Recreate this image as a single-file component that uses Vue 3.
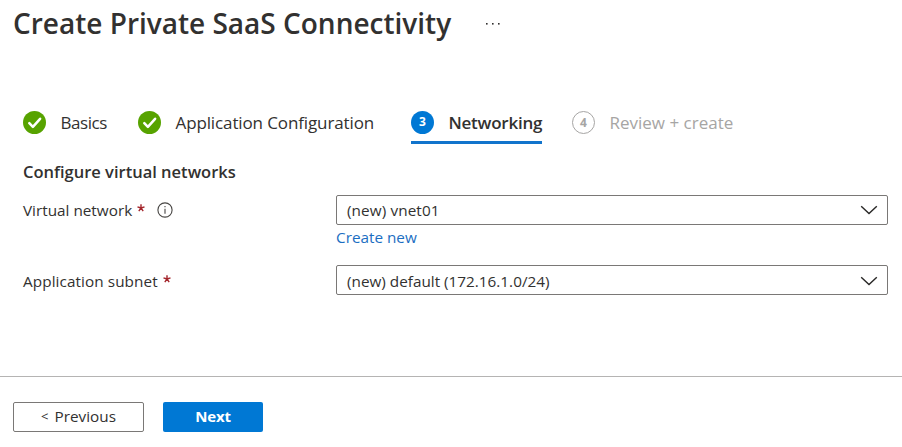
<script setup>
import { ref } from 'vue'

const steps = [
  { id: 'basics', label: 'Basics', state: 'done' },
  { id: 'config', label: 'Application Configuration', state: 'done' },
  { id: 'network', label: 'Networking', state: 'active', number: 3 },
  { id: 'review', label: 'Review + create', state: 'pending', number: 4 },
]

const fields = ref([
  { id: 'vnet', label: 'Virtual network', value: '(new) vnet01', info: true, link: 'Create new' },
  { id: 'subnet', label: 'Application subnet', value: '(new) default (172.16.1.0/24)' },
])
</script>

<template>
  <div class="page">
    <header class="header">
      <h1 class="title">Create Private SaaS Connectivity</h1>
      <svg class="more" width="16" height="4" viewBox="0 0 16 4" fill="#323130">
        <rect x="2" y="1" width="1.6" height="1.6" />
        <rect x="8" y="1" width="1.6" height="1.6" />
        <rect x="14" y="1" width="1.6" height="1.6" />
      </svg>
    </header>

    <nav class="steps">
      <div v-for="s in steps" :key="s.id" class="step" :class="[s.state, s.id]">
        <svg v-if="s.state === 'done'" class="badge" viewBox="0 0 23 23">
          <circle cx="11.5" cy="11.5" r="11.5" fill="#57a300" />
          <path d="M6.3 12.1l3.6 3.7 7.2-8" fill="none" stroke="#fff" stroke-width="2.5" stroke-linecap="round" stroke-linejoin="round" />
        </svg>
        <span v-else class="badge number">{{ s.number }}</span>
        <span class="step-label">{{ s.label }}</span>
      </div>
    </nav>

    <main class="form">
      <h2 class="section">Configure virtual networks</h2>
      <div v-for="f in fields" :key="f.id" class="field" :class="f.id">
        <div class="label">
          <span class="label-text">{{ f.label }}</span>
          <svg class="star" width="8" height="8" viewBox="0 0 8 8">
            <path d="M4 4V.2M4 4L.5 2.8M4 4l3.5-1.2M4 4L1.8 7.1M4 4l2.2 3.1" stroke="#a4262c" stroke-width="1.4" />
          </svg>
          <svg v-if="f.info" class="info" width="16" height="16" viewBox="0 0 16 16" fill="none" stroke="#484644">
            <circle cx="8" cy="8" r="7.1" stroke-width="1.1" />
            <path d="M8 6.7v5M8 4v1.3" stroke-width="1.1" />
          </svg>
        </div>
        <div class="control">
          <div class="select">
            <span class="value">{{ f.value }}</span>
            <svg width="18" height="10" viewBox="0 0 18 10" fill="none" stroke="#292827" stroke-width="1.4">
              <path d="M1.2 1.2L9 8.6l7.8-7.4" />
            </svg>
          </div>
          <a v-if="f.link" class="link">{{ f.link }}</a>
        </div>
      </div>
    </main>

    <footer class="footer">
      <button class="btn secondary"><span class="lt">&lt;</span><span>Previous</span></button>
      <button class="btn primary">Next</button>
    </footer>
  </div>
</template>

<style>
body {
  background: #fff;
}
</style>

<style scoped>
.page {
  height: 447px;
  display: flex;
  flex-direction: column;
  overflow: hidden;
  font-family: "Open Sans", "Noto Sans", sans-serif;
  color: #323130;
  font-size: 15.3px;
}
.header {
  height: 46px;
  display: flex;
  align-items: center;
  padding-left: 13px;
  box-sizing: border-box;
  flex: none;
}
.title {
  margin: 0;
  width: 471px;
  font-size: 28px;
  line-height: 46px;
  font-weight: 600;
  white-space: nowrap;
}
.more {
  margin-top: 2px;
}
.steps {
  display: flex;
  height: 44px;
  margin-top: 54px;
  padding-left: 23px;
  flex: none;
}
.step {
  display: flex;
  align-items: center;
  height: 44px;
  box-sizing: border-box;
  font-size: 17px;
  white-space: nowrap;
}
.basics {
  width: 115px;
  letter-spacing: -0.45px;
}
.config {
  width: 273px;
  letter-spacing: -0.12px;
}
.network {
  width: 131px;
  letter-spacing: -0.25px;
}
.review {
  margin-left: 30px;
}
.badge {
  width: 23px;
  height: 23px;
  flex: none;
  margin-right: 14.5px;
}
.number {
  box-sizing: border-box;
  border-radius: 50%;
  font-size: 12px;
  font-weight: 700;
  line-height: 21px;
  text-align: center;
  letter-spacing: 0;
}
.active {
  border-bottom: 3px solid #1174cc;
  border-top: 3px solid transparent;
  font-weight: 600;
}
.active .number {
  background: #0078d4;
  color: #fff;
}
.pending {
  color: #a6a5a4;
}
.pending .number {
  border: 1px solid #a6a5a4;
}
.form {
  padding: 15px 14px 0 23px;
}
.section {
  margin: 0;
  font-size: 16.5px;
  line-height: 26px;
  font-weight: 600;
}
.field {
  display: flex;
  height: 70px;
}
.vnet {
  margin-top: 10px;
}
.label {
  width: 313px;
  height: 30px;
  display: flex;
  align-items: center;
}
.subnet .label,
.subnet .select {
  padding-top: 2px;
}
.subnet .label {
  box-sizing: border-box;
  letter-spacing: 0.08px;
}
.star {
  margin: -4px 0 0 5px;
}
.info {
  margin-left: 12px;
}
.control {
  width: 552px;
}
.select {
  height: 30px;
  box-sizing: border-box;
  border: 1px solid #7a7876;
  border-radius: 2px;
  display: flex;
  align-items: center;
  justify-content: space-between;
  padding: 0 9px 0 10px;
}
.vnet .value {
  letter-spacing: 0.1px;
}
.link {
  display: block;
  line-height: 24px;
  color: #1b6ec2;
}
.footer {
  margin-top: auto;
  height: 71px;
  flex: none;
  box-sizing: border-box;
  border-top: 1px solid #b5b4b3;
  padding: 25px 0 0 13px;
  display: flex;
  gap: 19px;
}
.btn {
  height: 30px;
  box-sizing: border-box;
  border-radius: 2px;
  font: inherit;
  font-weight: 500;
  padding: 0 0 2px;
  display: flex;
  align-items: center;
  justify-content: center;
}
.secondary {
  width: 131px;
  border: 1px solid #7a7876;
  background: #fff;
  color: #323130;
  gap: 6px;
}
.lt {
  font-size: 13px;
}
.primary {
  width: 100px;
  border: 0;
  background: #0078d4;
  color: #fff;
  font-weight: 700;
  font-size: 15px;
  letter-spacing: -0.2px;
}
</style>
